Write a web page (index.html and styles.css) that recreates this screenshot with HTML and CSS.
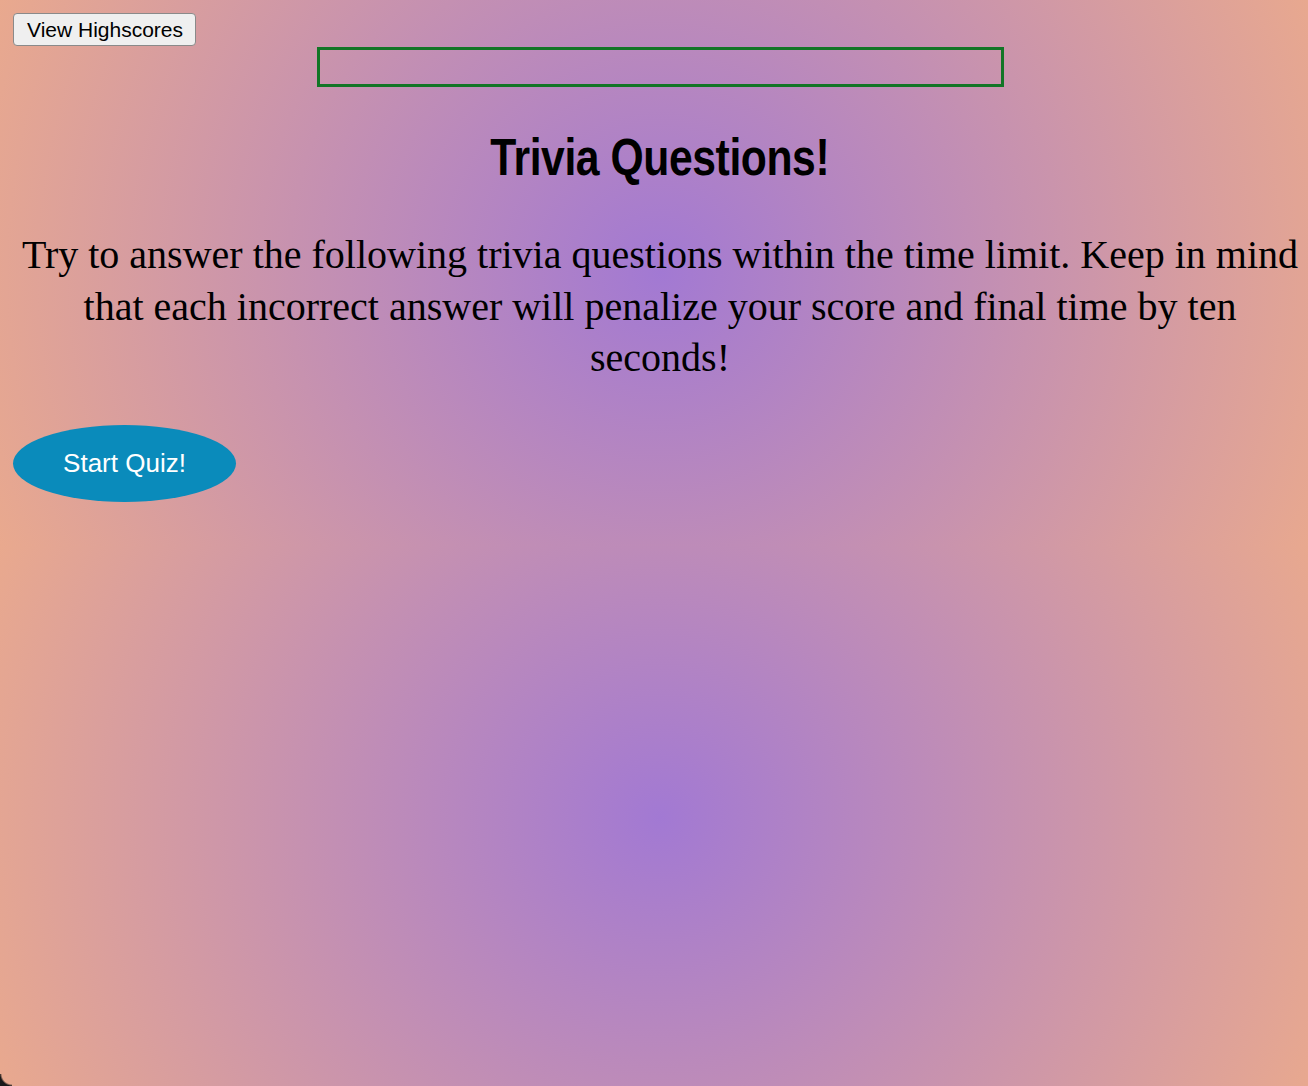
FILE: index.html
```html
<!DOCTYPE html>
<html lang="en">
<head>
<meta charset="utf-8">
<title>Trivia Questions</title>
<link rel="stylesheet" href="styles.css">
</head>
<body>
<div class="page">
  <header class="top-bar">
    <button class="hs-btn" type="button">View Highscores</button>
  </header>
  <div class="timer"></div>
  <h1 class="title"><span class="title-text">Trivia Questions!</span></h1>
  <p class="intro">Try to answer the following trivia questions within the time limit. Keep in mind that each incorrect answer will penalize your score and final time by ten seconds!</p>
  <button class="start-btn" type="button">Start Quiz!</button>
</div>
<div class="corner"></div>
</body>
</html>
```

FILE: styles.css
```css
html {
  min-height: 100%;
  background-color: #e8a88e;
  background-image: radial-gradient(circle at 660px 50%, #a279d3 0%, #e9a98e 100%);
  background-size: 100% 545px;
  background-repeat: repeat-y;
}

body {
  margin: 0;
  padding: 13px 1px 0 13px;
}

.page {
  display: flex;
  flex-direction: column;
  align-items: stretch;
}

.top-bar {
  display: flex;
}

.hs-btn {
  font-family: "Liberation Sans", Arial, sans-serif;
  font-size: 21px;
  line-height: 23px;
  color: #000;
  background: #efefef;
  border: 1px solid #8a8a8a;
  border-radius: 4px;
  padding: 4px 12px 4px 13px;
  margin: 0;
  height: 33px;
  cursor: pointer;
}

.timer {
  align-self: center;
  box-sizing: border-box;
  width: 687px;
  height: 40px;
  margin-top: 1px;
  border: 3px solid #127526;
}

.title {
  margin: 42px 0 0;
  text-align: center;
  font-family: "Liberation Sans", Arial, sans-serif;
  font-weight: bold;
  font-size: 52px;
  line-height: 57px;
  color: #000;
}

.title-text {
  display: inline-block;
  transform: scaleX(0.82);
  letter-spacing: -0.5px;
}

.intro {
  margin: 43px 0 0;
  text-align: center;
  font-family: "Liberation Serif", "Times New Roman", serif;
  font-size: 40px;
  line-height: 51.5px;
  color: #000;
}

.start-btn {
  align-self: flex-start;
  margin-top: 41px;
  width: 223px;
  height: 77px;
  border: none;
  border-radius: 50%;
  background: #0a8bbb;
  color: #fff;
  font-family: "Liberation Sans", Arial, sans-serif;
  font-size: 26px;
  padding: 0;
  cursor: pointer;
}

.corner {
  position: fixed;
  left: 0;
  bottom: 0;
  width: 12px;
  height: 12px;
  background: radial-gradient(circle at 100% 0, transparent 10px, #1a1a1a 12px);
}
```
